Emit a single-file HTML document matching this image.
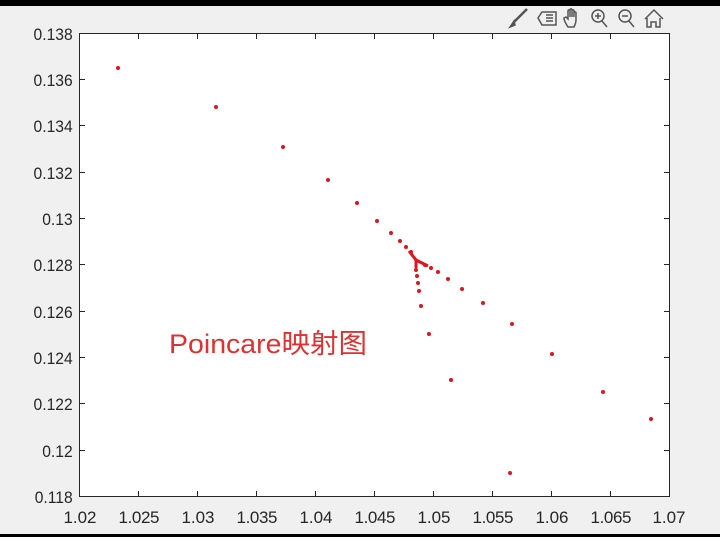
<!DOCTYPE html>
<html><head><meta charset="utf-8"><style>
html,body{margin:0;padding:0;width:720px;height:537px;overflow:hidden;background:#f0f0f0;}
</style></head><body>
<svg width="720" height="537" xmlns="http://www.w3.org/2000/svg" style="position:absolute;left:0;top:0">
<rect x="0" y="0" width="720" height="6" fill="#000"/>
<rect x="0" y="534" width="720" height="3" fill="#000"/>
<rect x="79.5" y="33.5" width="590" height="463" fill="#fff" stroke="#262626" stroke-width="1"/>
<g stroke="#262626" stroke-width="1">
<path d="M138.5 496v-5M197.5 496v-5M256.5 496v-5M315.5 496v-5M374.5 496v-5M433.5 496v-5M492.5 496v-5M551.5 496v-5M610.5 496v-5"/>
<path d="M138.5 34v5M197.5 34v5M256.5 34v5M315.5 34v5M374.5 34v5M433.5 34v5M492.5 34v5M551.5 34v5M610.5 34v5"/>
<path d="M80 79.5h5M80 125.5h5M80 172.5h5M80 218.5h5M80 264.5h5M80 311.5h5M80 357.5h5M80 403.5h5M80 450.5h5"/>
<path d="M669 79.5h-5M669 125.5h-5M669 172.5h-5M669 218.5h-5M669 264.5h-5M669 311.5h-5M669 357.5h-5M669 403.5h-5M669 450.5h-5"/>
</g>
<g font-family="Liberation Sans, sans-serif" font-size="17" fill="#262626" text-anchor="end" transform="scale(0.92,1)">
<text x="79" y="40">0.138</text><text x="79" y="86">0.136</text><text x="79" y="132">0.134</text><text x="79" y="179">0.132</text><text x="79" y="225">0.13</text><text x="79" y="271">0.128</text><text x="79" y="318">0.126</text><text x="79" y="364">0.124</text><text x="79" y="410">0.122</text><text x="79" y="457">0.12</text><text x="79" y="503">0.118</text>
</g>
<g font-family="Liberation Sans, sans-serif" font-size="17" fill="#262626" text-anchor="middle">
<text x="80" y="523" textLength="33">1.02</text><text x="139" y="523" textLength="41">1.025</text><text x="198" y="523" textLength="33">1.03</text><text x="257" y="523" textLength="41">1.035</text><text x="316" y="523" textLength="33">1.04</text><text x="375" y="523" textLength="41">1.045</text><text x="434" y="523" textLength="33">1.05</text><text x="493" y="523" textLength="41">1.055</text><text x="552" y="523" textLength="33">1.06</text><text x="611" y="523" textLength="41">1.065</text><text x="669" y="523" textLength="33">1.07</text>
</g>
<g fill="#e0141c">
<circle cx="118" cy="68" r="2"/><circle cx="216" cy="107" r="2"/><circle cx="283" cy="147" r="2"/><circle cx="328" cy="180" r="2"/><circle cx="357" cy="203" r="2"/><circle cx="377" cy="221" r="2"/><circle cx="391" cy="233" r="2"/><circle cx="400" cy="241" r="2"/><circle cx="406" cy="247" r="2"/><circle cx="411" cy="252" r="2"/>
<circle cx="425" cy="265" r="2"/><circle cx="431" cy="268" r="2"/><circle cx="438" cy="272" r="2"/><circle cx="448" cy="279" r="2"/><circle cx="462" cy="289" r="2"/><circle cx="483" cy="303" r="2"/><circle cx="512" cy="324" r="2"/><circle cx="552" cy="354" r="2"/><circle cx="603" cy="392" r="2"/><circle cx="651" cy="419" r="2"/>
<circle cx="416" cy="270" r="2"/><circle cx="417" cy="276" r="2"/><circle cx="418" cy="283" r="2"/><circle cx="419" cy="291" r="2"/><circle cx="421" cy="306" r="2"/><circle cx="429" cy="334" r="2"/><circle cx="451" cy="380" r="2"/><circle cx="510" cy="473" r="2"/>
</g>
<path d="M409 251L416 260L428 266M416 260L416 268" stroke="#e0141c" stroke-width="3" fill="none"/>
<text x="169" y="353" font-family="Liberation Sans, Noto Sans CJK SC, sans-serif" font-size="27" fill="#e03030" textLength="198" lengthAdjust="spacingAndGlyphs">Poincare映射图</text>
<g stroke="#555" fill="none" stroke-width="1.5">
<path d="M527 9L514 22" stroke-width="2.5"/><path d="M514 21l-4 6 5-2z" fill="#555"/>
<path d="M538 18l4-6h14v13h-14z"/><path d="M546 15h7M546 18h7M546 21h7"/>
<path d="M568 27c-2-3-4-6-4-9l2-1 2 2v-8c0-1.5 2-1.5 2 0v6-7c0-1.5 2-1.5 2 0v7-6c0-1.5 2-1.5 2 0v6-4c0-1.5 2-1.5 2 0v7c0 3-1 5-2 7z"/>
<circle cx="598" cy="16" r="6"/><path d="M602 21l5 6M598 13v6M595 16h6"/>
<circle cx="625" cy="16" r="6"/><path d="M629 21l5 6M622 16h6"/>
<path d="M645 19l9-9 9 9M647 18v9h4v-5h5v5h4v-9"/>
</g>
</svg>
</body></html>
